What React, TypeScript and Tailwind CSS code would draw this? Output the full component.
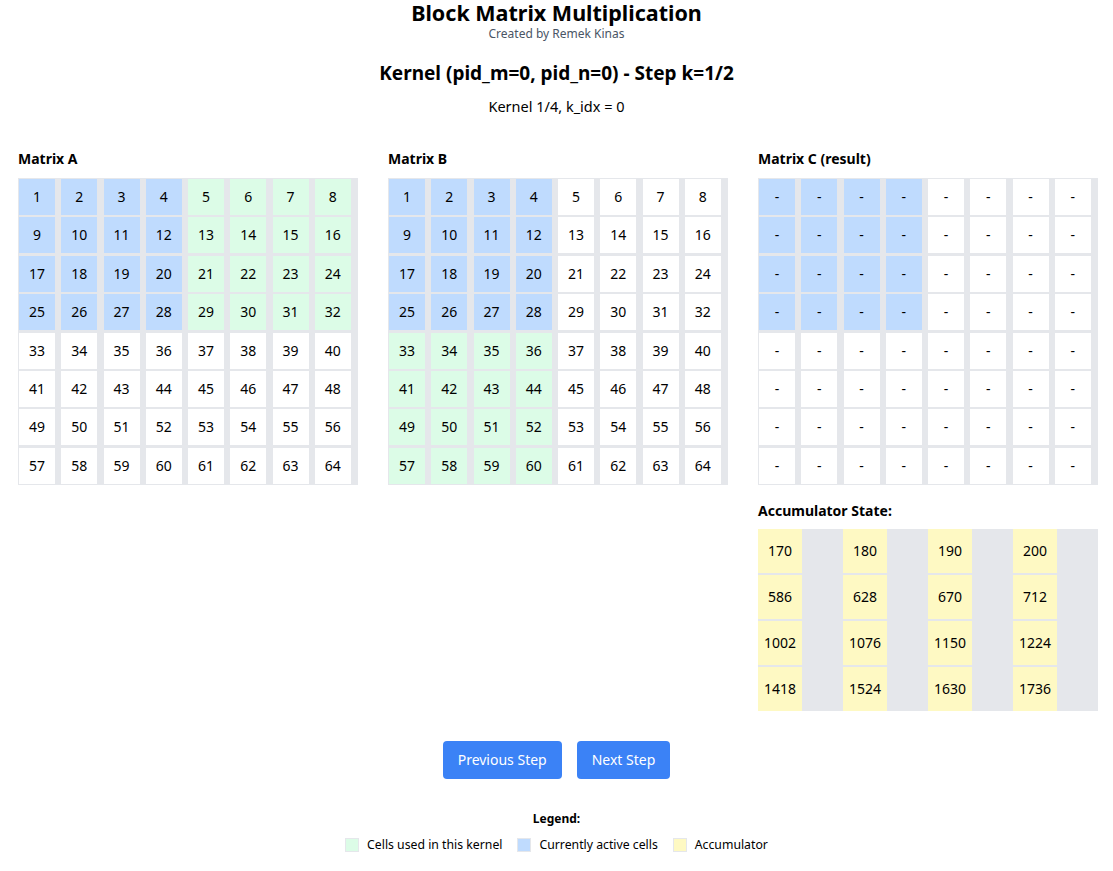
import React from 'react';

type Tone = 'blue' | 'green' | 'white';

const toneClass: Record<Tone, string> = {
    blue: 'bg-[#bfdbfe]',
    green: 'bg-[#dcfce7]',
    white: 'bg-white',
};

const N = 8;
const range = Array.from({ length: N * N }, (_, i) => i);

function toneA(r: number, c: number): Tone {
    if (r < 4 && c < 4) return 'blue';
    if (r < 4) return 'green';
    return 'white';
}

function toneB(r: number, c: number): Tone {
    if (r < 4 && c < 4) return 'blue';
    if (c < 4) return 'green';
    return 'white';
}

function toneC(r: number, c: number): Tone {
    return r < 4 && c < 4 ? 'blue' : 'white';
}

function MatrixGrid({
    title,
    tone,
    value,
}: {
    title: string;
    tone: (r: number, c: number) => Tone;
    value: (i: number) => string;
}) {
    return (
        <div>
            <h3 className="mb-[9px] text-sm font-bold text-black">{title}</h3>
            <div className="grid grid-cols-8 gap-y-[2.4px] border border-gray-200 bg-gray-200">
                {range.map((i) => {
                    const r = Math.floor(i / N);
                    const c = i % N;
                    return (
                        <div
                            key={i}
                            className={`flex h-9 w-9 items-center justify-center text-sm text-black ${toneClass[tone(r, c)]}`}
                        >
                            {value(i)}
                        </div>
                    );
                })}
            </div>
        </div>
    );
}

const accumulator = [
    170, 180, 190, 200, 586, 628, 670, 712, 1002, 1076, 1150, 1224, 1418, 1524, 1630, 1736,
];

export default function App() {
    return (
        <div
            className="min-h-screen bg-white px-[18px] text-black"
            style={{ fontFamily: '"Noto Sans", "Open Sans", sans-serif' }}
        >
            <header className="text-center">
                <h1 className="text-[21.5px] font-bold leading-[26px]">Block Matrix Multiplication</h1>
                <p className="text-xs leading-4 text-gray-600">Created by Remek Kinas</p>
                <h2 className="mt-[19px] text-[19px] font-bold leading-6">
                    Kernel (pid_m=0, pid_n=0) - Step k=1/2
                </h2>
                <p className="mt-[11px] text-[14.5px] leading-5">Kernel 1/4, k_idx = 0</p>
            </header>

            <div className="mt-[33px] grid grid-cols-[340px_340px_340px] gap-[30px]">
                <MatrixGrid title="Matrix A" tone={toneA} value={(i) => String(i + 1)} />
                <MatrixGrid title="Matrix B" tone={toneB} value={(i) => String(i + 1)} />
                <div>
                    <MatrixGrid title="Matrix C (result)" tone={toneC} value={() => '-'} />
                    <h3 className="mb-[8px] mt-[16px] text-sm font-bold">Accumulator State:</h3>
                    <div className="grid grid-cols-4 gap-y-0.5 bg-gray-200">
                        {accumulator.map((v) => (
                            <div
                                key={v}
                                className="flex h-11 w-11 items-center justify-center bg-[#fef9c3] text-sm"
                            >
                                {v}
                            </div>
                        ))}
                    </div>
                </div>
            </div>

            <div className="mt-[30px] flex justify-center gap-[15px]">
                <button className="h-[38px] rounded bg-[#3b82f6] px-[15px] text-sm text-white">
                    Previous Step
                </button>
                <button className="h-[38px] rounded bg-[#3b82f6] px-[15px] text-sm text-white">
                    Next Step
                </button>
            </div>

            <div className="mt-[30px] text-center">
                <h4 className="text-xs font-bold leading-5">Legend:</h4>
                <div className="mt-[7px] flex items-center justify-center gap-[15px] text-[12.25px]">
                    <div className="flex items-center gap-2">
                        <span className="h-3.5 w-3.5 border border-gray-200 bg-[#dcfce7]" />
                        <span>Cells used in this kernel</span>
                    </div>
                    <div className="flex items-center gap-2">
                        <span className="h-3.5 w-3.5 border border-gray-200 bg-[#bfdbfe]" />
                        <span>Currently active cells</span>
                    </div>
                    <div className="flex items-center gap-2">
                        <span className="h-3.5 w-3.5 border border-gray-200 bg-[#fef9c3]" />
                        <span>Accumulator</span>
                    </div>
                </div>
            </div>
        </div>
    );
}
